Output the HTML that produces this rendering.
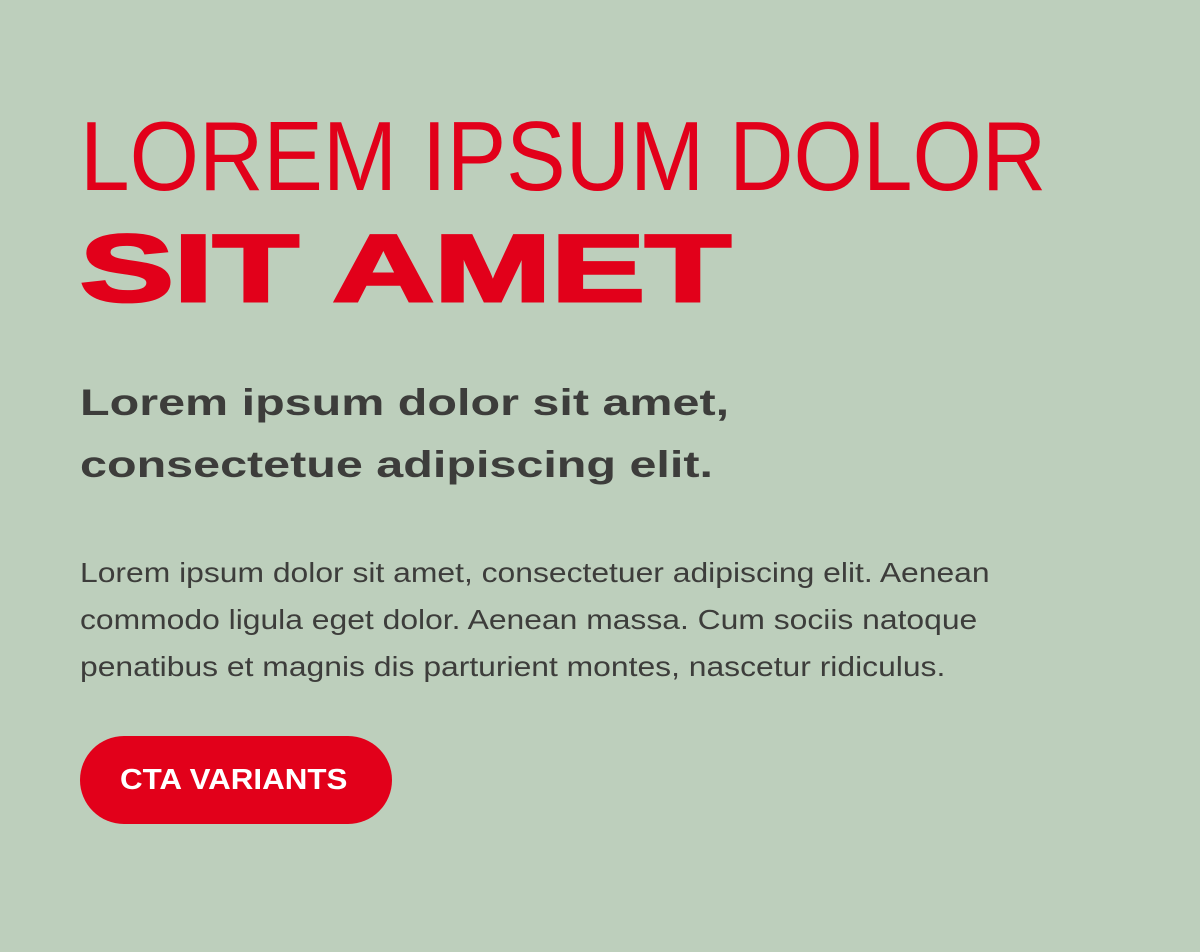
<!DOCTYPE html>
<html><head><meta charset="utf-8"><style>
html,body{margin:0;padding:0;}
body{width:1200px;height:952px;background:#bdcfbc;overflow:hidden;position:relative;font-family:"Liberation Sans",sans-serif;}
.h1{position:absolute;left:80px;top:96px;font-size:98px;line-height:120px;color:#e2001a;white-space:nowrap;transform:scaleX(0.91);transform-origin:left top;}
.h2{position:absolute;left:80px;top:209px;font-size:95px;line-height:120px;font-weight:bold;color:#e2001a;white-space:nowrap;transform:scaleX(1.48);transform-origin:left top;-webkit-text-stroke:3px #e2001a;}
.sub{position:absolute;left:80px;top:372px;font-size:37px;line-height:62px;font-weight:bold;color:#3d3d3b;white-space:nowrap;transform:scaleX(1.31);transform-origin:left top;}
.body{position:absolute;left:80px;top:549px;font-size:28px;line-height:47px;color:#3d3d3b;white-space:nowrap;transform:scaleX(1.137);transform-origin:left top;}
.btn{position:absolute;left:80px;top:736px;width:312px;height:88px;border-radius:44px;background:#e2001a;}
.btn span{position:absolute;left:40px;top:0;font-weight:bold;font-size:29px;line-height:88px;color:#fff;white-space:nowrap;transform:scaleX(1.08);transform-origin:left top;}
</style></head><body>
<div class="h1">LOREM IPSUM DOLOR</div>
<div class="h2">SIT AMET</div>
<div class="sub">Lorem ipsum dolor sit amet,<br>consectetue adipiscing elit.</div>
<div class="body">Lorem ipsum dolor sit amet, consectetuer adipiscing elit. Aenean<br>commodo ligula eget dolor. Aenean massa. Cum sociis natoque<br>penatibus et magnis dis parturient montes, nascetur ridiculus.</div>
<div class="btn"><span>CTA VARIANTS</span></div>
</body></html>
